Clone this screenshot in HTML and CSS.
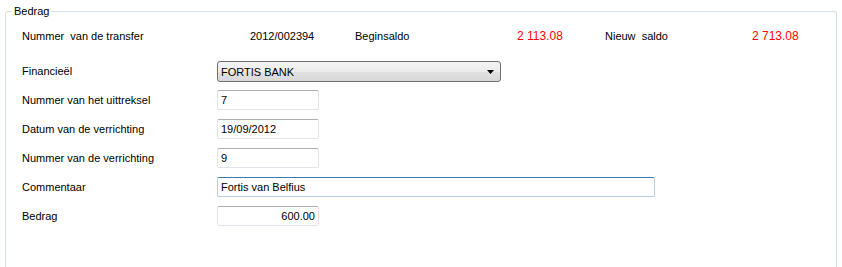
FILE: index.html
```html
<!DOCTYPE html>
<html lang="nl">
<head>
    <meta charset="UTF-8">
    <title>Bedrag</title>
    <link rel="stylesheet" href="styles.css">
</head>
<body>
    <fieldset class="group">
        <legend>Bedrag</legend>

        <div class="summary">
            <span class="cell c1">Nummer&nbsp; van de transfer</span>
            <span class="cell c2">2012/002394</span>
            <span class="cell c3">Beginsaldo</span>
            <span class="cell c4 amount">2 113.08</span>
            <span class="cell c5">Nieuw&nbsp; saldo</span>
            <span class="cell amount">2 713.08</span>
        </div>

        <div class="form">
            <label class="field-label">Financieël</label>
            <div class="combo">
                <span>FORTIS BANK</span>
                <svg class="arrow" width="7" height="4" viewBox="0 0 7 4"><path d="M0 0h7L3.5 4z" fill="#000"/></svg>
            </div>

            <label class="field-label">Nummer van het uittreksel</label>
            <div class="textbox short">7</div>

            <label class="field-label">Datum van de verrichting</label>
            <div class="textbox short">19/09/2012</div>

            <label class="field-label">Nummer van de verrichting</label>
            <div class="textbox short">9</div>

            <label class="field-label">Commentaar</label>
            <div class="textbox wide focused">Fortis van Belfius</div>

            <label class="field-label">Bedrag</label>
            <div class="textbox short right">600.00</div>
        </div>
    </fieldset>
</body>
</html>
```

FILE: styles.css
```css
html, body {
    margin: 0;
    height: 267px;
    overflow: hidden;
    background: #ffffff;
}

body {
    font-family: "Liberation Sans", Arial, sans-serif;
    font-size: 11px;
    color: #000000;
}

.group {
    box-sizing: border-box;
    margin: 5px 0 0 5px;
    padding: 0;
    width: 832px;
    height: 262px;
    border: 1px solid #d5dfe5;
    border-bottom: none;
    border-radius: 3px 3px 0 0;
    min-width: 0;
}

.group legend {
    margin-left: 6px;
    padding: 0 2px;
    line-height: 13px;
}

.summary {
    display: flex;
    align-items: center;
    height: 13px;
    margin-top: 11px;
    padding-left: 16px;
}

.cell {
    flex: none;
}

.c1 { width: 228px; }
.c2 { width: 105px; }
.c3 { width: 162px; }
.c4 { width: 88px; }
.c5 { width: 147px; }

.amount {
    color: #ff0000;
    font-size: 12px;
}

.form {
    display: grid;
    grid-template-columns: 195px auto;
    grid-auto-rows: 20px;
    row-gap: 9px;
    margin-top: 19px;
    padding-left: 16px;
    justify-items: start;
    align-items: center;
}

.field-label {
    line-height: 13px;
}

.combo {
    box-sizing: border-box;
    width: 284px;
    height: 21px;
    align-self: start;
    display: flex;
    align-items: center;
    justify-content: space-between;
    padding: 0 6px 0 3px;
    border: 1px solid #707070;
    border-radius: 3px;
    background: linear-gradient(#f4f4f4 0%, #ececec 50%, #e2e2e2 51%, #d8d8d8 100%);
}

.textbox {
    box-sizing: border-box;
    height: 20px;
    line-height: 18px;
    padding: 0 3px;
    border: 1px solid #e2e3ea;
    border-top-color: #abadb3;
    border-radius: 2px;
    background: #ffffff;
}

.short { width: 102px; }
.wide { width: 438px; }

.right {
    text-align: right;
}

.focused {
    border-color: #b5cfe7;
    border-top-color: #3d7bad;
}
```
